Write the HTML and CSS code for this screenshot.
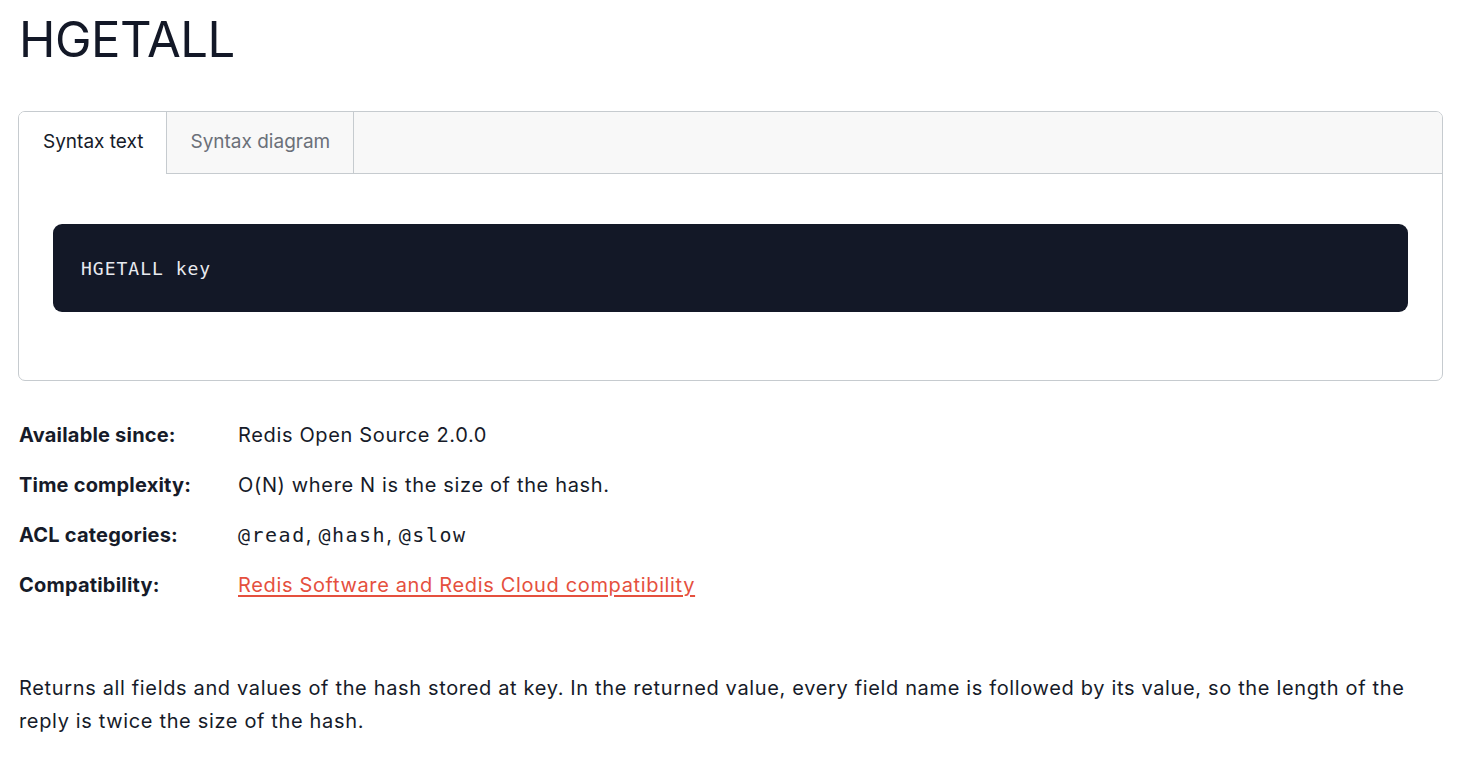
FILE: index.html
```html
<!DOCTYPE html>
<html lang="en">
<head>
<meta charset="utf-8">
<title>HGETALL</title>
<link rel="stylesheet" href="styles.css">
</head>
<body>
<main class="page">
  <h1 class="title">HGETALL</h1>
  <section class="tabs">
    <div class="tab-bar">
      <div class="tab tab-active">Syntax text</div>
      <div class="tab">Syntax diagram</div>
    </div>
    <div class="tab-panel">
      <pre class="code">HGETALL key</pre>
    </div>
  </section>
  <dl class="meta">
    <div class="meta-row"><dt>Available since:</dt><dd>Redis Open Source 2.0.0</dd></div>
    <div class="meta-row"><dt>Time complexity:</dt><dd>O(N) where N is the size of the hash.</dd></div>
    <div class="meta-row"><dt>ACL categories:</dt><dd><code class="acl">@read</code>, <code class="acl">@hash</code>, <code class="acl">@slow</code></dd></div>
    <div class="meta-row"><dt>Compatibility:</dt><dd><a class="link" href="#">Redis Software and Redis Cloud compatibility</a></dd></div>
  </dl>
  <p class="desc">Returns all fields and values of the hash stored at key. In the returned value, every field name is followed by its value, so the length of the reply is twice the size of the hash.</p>
</main>
</body>
</html>
```
FILE: styles.css
```css
* { box-sizing: border-box; }
html, body { margin: 0; padding: 0; background: #ffffff; }
body {
  font-family: Inter, "Noto Sans", sans-serif;
  color: #161b29;
}
.page {
  width: 1425px;
  margin-left: 18px;
  padding-top: 12px;
}
.title {
  margin: 0 0 0 1px;
  font-family: Inter, sans-serif;
  font-weight: 400;
  font-size: 49px;
  line-height: 56px;
  letter-spacing: -0.5px;
  color: #131827;
}
.tabs {
  margin-top: 43px;
  border: 1px solid #c6cbcf;
  border-radius: 7px;
  overflow: hidden;
}
.tab-bar {
  display: flex;
  background: #f8f8f8;
  border-bottom: 1px solid #c6cbcf;
  height: 62px;
}
.tab {
  display: flex;
  align-items: center;
  padding: 0 23px 3px;
  font-size: 19px;
  color: #6b7079;
  border-right: 1px solid #c6cbcf;
  margin-bottom: -1px;
}
.tab-active {
  background: #ffffff;
  color: #161b29;
  padding: 0 23px 3px 24px;
}
.tab-panel {
  padding: 50px 34px 68px;
}
.code {
  margin: 0;
  background: #131827;
  color: #e8eaef;
  border-radius: 9px;
  height: 88px;
  padding: 0 28px;
  display: flex;
  align-items: center;
  font-family: "DejaVu Sans Mono", "Liberation Mono", monospace;
  font-size: 18px;
  letter-spacing: 1px;
}
.meta {
  margin: 29px 0 0 1px;
  display: flex;
  flex-direction: column;
}
.meta-row {
  display: flex;
  height: 50px;
  align-items: center;
}
.meta-row dt {
  width: 219px;
  font-weight: 650;
  font-size: 20px;
  letter-spacing: 0.2px;
}
.meta-row dd {
  margin: 0;
  font-size: 20px;
  letter-spacing: 0.65px;
}
.acl {
  font-family: "DejaVu Sans Mono", "Liberation Mono", monospace;
  font-size: 20px;
  letter-spacing: 1.5px;
}
.link {
  color: #e5503e;
  text-decoration: underline;
  text-underline-offset: 3px;
}
.desc {
  margin: 62px 0 0 1px;
  font-size: 20px;
  line-height: 33px;
  letter-spacing: 0.65px;
  max-width: 1410px;
}
```
